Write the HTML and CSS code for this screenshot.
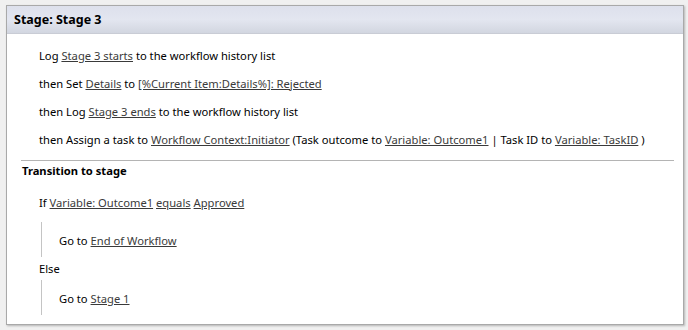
FILE: index.html
```html
<!DOCTYPE html>
<html>
<head>
  <title>Stage 3</title>
  <meta charset="UTF-8">
  <link rel="stylesheet" href="styles.css">
</head>
<body>
  <div class="stage">
    <div class="stage-head">Stage: Stage 3</div>
    <div class="stage-body">
      <div class="action">Log <a href="#">Stage 3 starts</a> to the workflow history list</div>
      <div class="action">then Set <a href="#">Details</a> to <a href="#">[%Current Item:Details%]: Rejected</a></div>
      <div class="action">then Log <a href="#">Stage 3 ends</a> to the workflow history list</div>
      <div class="action">then Assign a task to <a href="#">Workflow Context:Initiator</a> (Task outcome to <a href="#">Variable: Outcome1</a> | Task ID to <a href="#">Variable: TaskID</a> )</div>

      <div class="transition">
        <h3>Transition to stage</h3>
        <div class="cond">If <a href="#">Variable: Outcome1</a> <a href="#">equals</a> <a href="#">Approved</a></div>
        <div class="branch">
          <div class="branch-line">Go to <a href="#">End of Workflow</a></div>
        </div>
        <div class="cond else">Else</div>
        <div class="branch after-else">
          <div class="branch-line">Go to <a href="#">Stage 1</a></div>
        </div>
      </div>
    </div>
  </div>
</body>
</html>
```

FILE: styles.css
```css
/* Reset styles */
* {
  margin: 0;
  padding: 0;
  box-sizing: border-box;
}

body {
  font-family: "Noto Sans", "Open Sans", sans-serif;
  font-size: 11.2px;
  color: #000;
  background-color: #f0f0f0;
  padding: 5px 5px 6px 6px;
}

a {
  color: #3a3a3a;
  text-decoration: underline;
}

/* Stage box */
.stage {
  width: 678px;
  height: 320px;
  overflow: hidden;
  background-color: #fff;
  border: 1px solid #a9a9a9;
  box-shadow: 1px 1px 2px rgba(0, 0, 0, 0.25);
}

.stage-head {
  height: 28px;
  line-height: 28px;
  padding-left: 7px;
  font-size: 12.5px;
  font-weight: 700;
  background: linear-gradient(#dde0ec, #e3e6f0 50%, #d2d6e0);
  border-bottom: 1px solid #c9ccd5;
}

.stage-body {
  padding-top: 8px;
}

.action {
  height: 28px;
  line-height: 28px;
  padding-left: 32px;
}

/* Transition block */
.transition {
  margin: 6px 9px 0 14px;
  border-top: 1px solid #b4b4b4;
}

.transition h3 {
  font-size: 11.2px;
  font-weight: 700;
  line-height: 20px;
  padding-left: 1px;
}

.cond {
  line-height: 20px;
  margin-top: 12px;
  padding-left: 18px;
}

.cond.else {
  margin-top: 2px;
}

.branch {
  margin: 9px 0 0 20px;
  height: 35px;
  border-left: 1px solid #c4c4c4;
  padding: 9px 0 0 17px;
}

.branch.after-else {
  margin-top: 1px;
}

.branch-line {
  line-height: 20px;
}
```
